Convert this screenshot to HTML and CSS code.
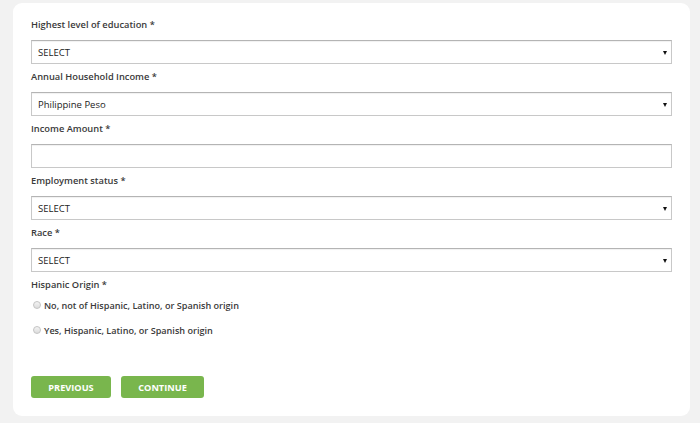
FILE: index.html
```html
<!DOCTYPE html>
<html>
<head>
<meta charset="utf-8">
<link rel="stylesheet" href="styles.css">
</head>
<body>
<form class="card">
  <div class="label">Highest level of education *</div>
  <div class="select"><span>SELECT</span><span class="arrow"></span></div>

  <div class="label">Annual Household Income *</div>
  <div class="select"><span>Philippine Peso</span><span class="arrow"></span></div>

  <div class="label">Income Amount *</div>
  <div class="input"></div>

  <div class="label">Employment status *</div>
  <div class="select"><span>SELECT</span><span class="arrow"></span></div>

  <div class="label">Race *</div>
  <div class="select"><span>SELECT</span><span class="arrow"></span></div>

  <div class="label">Hispanic Origin *</div>
  <div class="radios">
    <div class="radio"><span class="dot"></span><span>No, not of Hispanic, Latino, or Spanish origin</span></div>
    <div class="radio"><span class="dot"></span><span>Yes, Hispanic, Latino, or Spanish origin</span></div>
  </div>

  <div class="buttons">
    <button type="button" class="btn btn-prev">PREVIOUS</button>
    <button type="button" class="btn btn-next">CONTINUE</button>
  </div>
</form>
</body>
</html>
```
FILE: styles.css
```css
html, body {
  margin: 0;
  padding: 0;
  background: #f2f2f2;
}
body {
  padding: 3px 10px 7px 13px;
  font-family: "Open Sans", "Liberation Sans", sans-serif;
  color: #333;
}
.card {
  background: #fff;
  border-radius: 9px;
  padding: 15px 18px 18px 18px;
  height: 380px;
  display: flex;
  flex-direction: column;
}
.label {
  font-size: 9.3px;
  font-weight: 600;
  line-height: 14px;
  height: 14px;
  margin-bottom: 8px;
  color: #3a3a3a;
}
.select, .input {
  box-sizing: border-box;
  height: 24px;
  border: 1px solid #c8c8c8;
  border-top-color: #b4b4b4;
  box-shadow: inset 0 1px 1px rgba(0,0,0,0.06);
  margin-bottom: 6px;
  display: flex;
  align-items: center;
  justify-content: space-between;
  padding: 0 4px 0 6px;
  font-size: 9.5px;
  color: #222;
  background: #fff;
}
.arrow {
  width: 0;
  height: 0;
  border-left: 2.5px solid transparent;
  border-right: 2.5px solid transparent;
  border-top: 4px solid #111;
  margin-top: 1px;
}
.radios {
  display: flex;
  flex-direction: column;
  gap: 11px;
  margin-top: -2px;
}
.radio {
  display: flex;
  align-items: center;
  height: 14px;
  font-size: 9.1px;
  font-weight: 600;
  color: #3a3a3a;
  padding-left: 2px;
}
.dot {
  width: 6px;
  height: 6px;
  border-radius: 50%;
  border: 1px solid #c4c4c4;
  background: linear-gradient(#f4f4f4, #dcdcdc);
  margin-right: 3px;
}
.buttons {
  display: flex;
  gap: 10px;
  margin-top: 39px;
}
.btn {
  height: 22px;
  border: none;
  border-radius: 3px;
  background: #79b64d;
  color: #fff;
  font-family: "Open Sans", "Liberation Sans", sans-serif;
  font-weight: 700;
  font-size: 9.2px;
  padding: 0;
  cursor: pointer;
}
.btn-prev { width: 80px; }
.btn-next { width: 83px; }
```
